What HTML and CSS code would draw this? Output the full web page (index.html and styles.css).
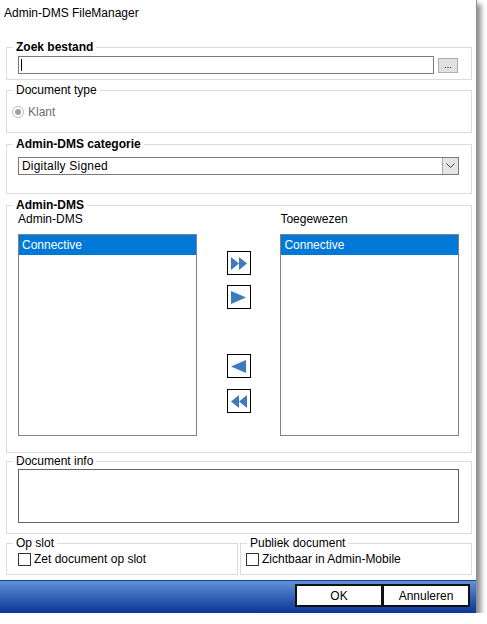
FILE: index.html
```html
<!DOCTYPE html>
<html lang="nl">
<head>
    <meta charset="UTF-8">
    <title>Admin-DMS FileManager</title>
    <link rel="stylesheet" href="styles.css">
</head>
<body>
    <div class="window">
        <div class="titlebar">Admin-DMS FileManager</div>
        <div class="content">
            <fieldset class="group g-file">
                <legend class="bold">Zoek bestand</legend>
                <div class="body row">
                    <div class="textbox"><span class="caret"></span></div>
                    <button class="browse">...</button>
                </div>
            </fieldset>

            <fieldset class="group g-type">
                <legend>Document type</legend>
                <div class="body row">
                    <span class="radio"><span class="dot"></span></span>
                    <span class="disabled">Klant</span>
                </div>
            </fieldset>

            <fieldset class="group g-cat">
                <legend class="bold">Admin-DMS categorie</legend>
                <div class="body">
                    <div class="combo">
                        <span class="combo-text">Digitally Signed</span>
                        <span class="combo-btn">
                            <svg width="9" height="6" viewBox="0 0 9 6"><path d="M0.5 0.5 L4.5 4.5 L8.5 0.5" fill="none" stroke="#404040" stroke-width="1"/></svg>
                        </span>
                    </div>
                </div>
            </fieldset>

            <fieldset class="group g-dms">
                <legend class="bold">Admin-DMS</legend>
                <div class="body dms">
                    <div class="col">
                        <div class="label">Admin-DMS</div>
                        <div class="listbox">
                            <div class="item selected">Connective</div>
                        </div>
                    </div>
                    <div class="movers">
                        <button class="mover m-all-right">
                            <svg width="16" height="13" viewBox="0 0 16 13"><path d="M0 0 L8 6.5 L0 13 Z M8 0 L16 6.5 L8 13 Z" fill="#3d7abf"/></svg>
                        </button>
                        <button class="mover m-right">
                            <svg width="15" height="13" viewBox="0 0 15 13"><path d="M0 0 L15 6.5 L0 13 Z" fill="#3d7abf"/></svg>
                        </button>
                        <button class="mover m-left">
                            <svg width="15" height="13" viewBox="0 0 15 13"><path d="M15 0 L0 6.5 L15 13 Z" fill="#3d7abf"/></svg>
                        </button>
                        <button class="mover m-all-left">
                            <svg width="16" height="13" viewBox="0 0 16 13"><path d="M8 0 L0 6.5 L8 13 Z M16 0 L8 6.5 L16 13 Z" fill="#3d7abf"/></svg>
                        </button>
                    </div>
                    <div class="col">
                        <div class="label">Toegewezen</div>
                        <div class="listbox">
                            <div class="item selected">Connective</div>
                        </div>
                    </div>
                </div>
            </fieldset>

            <fieldset class="group g-info">
                <legend>Document info</legend>
                <div class="body">
                    <div class="memo"></div>
                </div>
            </fieldset>

            <div class="split">
                <fieldset class="group g-lock">
                    <legend>Op slot</legend>
                    <div class="body row">
                        <span class="check"></span>
                        <span>Zet document op slot</span>
                    </div>
                </fieldset>
                <fieldset class="group g-public">
                    <legend>Publiek document</legend>
                    <div class="body row">
                        <span class="check"></span>
                        <span>Zichtbaar in Admin-Mobile</span>
                    </div>
                </fieldset>
            </div>
        </div>
        <div class="footer">
            <button class="dlg-btn">OK</button>
            <button class="dlg-btn">Annuleren</button>
        </div>
    </div>
</body>
</html>
```

FILE: styles.css
```css
body {
    margin: 0;
    background-color: #ffffff;
    font-family: "Liberation Sans", Arial, sans-serif;
    font-size: 12px;
    color: #000000;
}
.window {
    width: 476px;
    height: 613px;
    background-color: #ffffff;
    border-right: 1px solid #8f8f8f;
    box-shadow: 4px 4px 5px rgba(0, 0, 0, 0.45);
    display: flex;
    flex-direction: column;
}
.titlebar {
    height: 26px;
    padding: 6px 0 0 4px;
    line-height: 14px;
    box-sizing: border-box;
}
.content {
    flex: 1;
    padding: 14px 4px 0 6px;
    display: flex;
    flex-direction: column;
}
.group {
    margin: 0;
    padding: 0;
    border: 1px solid #dcdcdc;
    min-width: 0;
}
.group legend {
    margin-left: 6px;
    padding: 0 3px;
    line-height: 14px;
}
.bold {
    font-weight: bold;
}
.row {
    display: flex;
    align-items: center;
}

/* Zoek bestand */
.g-file .body {
    padding: 2px 13px 5px 11px;
}
.textbox {
    flex: 1;
    height: 18px;
    border: 1px solid #7a7a7a;
    box-sizing: border-box;
    display: flex;
    align-items: center;
    padding-left: 2px;
}
.caret {
    width: 1px;
    height: 12px;
    background-color: #000000;
}
.browse {
    width: 20px;
    height: 15px;
    margin-left: 4px;
    padding: 0;
    border: 1px solid #adadad;
    background-color: #e1e1e1;
    font-family: inherit;
    font-size: 9px;
    line-height: 11px;
}

/* Document type */
.g-type {
    margin-top: 3px;
}
.g-type .body {
    padding: 8px 0 13px 5px;
    height: 14px;
}
.radio {
    width: 10px;
    height: 10px;
    border: 1px solid #bcbcbc;
    border-radius: 50%;
    display: flex;
    align-items: center;
    justify-content: center;
    margin-right: 4px;
}
.dot {
    width: 6px;
    height: 6px;
    border-radius: 50%;
    background-color: #a0a0a0;
}
.disabled {
    color: #6d6d6d;
}

/* Categorie */
.g-cat {
    margin-top: 4px;
}
.g-cat .body {
    padding: 6px 12px 18px 11px;
}
.combo {
    height: 18px;
    border: 1px solid #7a7a7a;
    box-sizing: border-box;
    display: flex;
    align-items: stretch;
}
.combo-text {
    flex: 1;
    padding-left: 3px;
    line-height: 16px;
    font-size: 12px;
    letter-spacing: 0.2px;
}
.combo-btn {
    width: 15px;
    background-color: #e5e5e5;
    border-left: 1px solid #adadad;
    display: flex;
    align-items: center;
    justify-content: center;
}

/* Admin-DMS lijsten */
.g-dms {
    margin-top: 4px;
}
.dms {
    display: flex;
    padding: 0 12px 16px 11px;
}
.col {
    width: 179px;
    display: flex;
    flex-direction: column;
}
.label {
    line-height: 14px;
    height: 22px;
}
.listbox {
    height: 202px;
    border: 1px solid #828282;
    box-sizing: border-box;
}
.item {
    height: 20px;
    line-height: 20px;
    padding-left: 3px;
    font-size: 12px;
}
.selected {
    background-color: #0078d7;
    color: #ffffff;
}
.movers {
    width: 84px;
    padding-top: 39px;
    display: flex;
    flex-direction: column;
    align-items: center;
}
.mover {
    width: 24px;
    height: 24px;
    padding: 0;
    border: 1px solid #000000;
    background-color: #ffffff;
    display: flex;
    align-items: center;
    justify-content: center;
}
.m-right {
    margin-top: 10px;
}
.m-left {
    margin-top: 45px;
}
.m-all-left {
    margin-top: 11px;
}

/* Document info */
.g-info {
    margin-top: 1px;
}
.g-info .body {
    padding: 1px 12px 10px 11px;
}
.memo {
    height: 54px;
    border: 1px solid #646464;
    box-sizing: border-box;
}

/* Op slot / Publiek */
.split {
    display: flex;
    gap: 2px;
    margin-top: 2px;
}
.g-lock {
    width: 232px;
    box-sizing: border-box;
}
.g-public {
    flex: 1;
}
.split .body {
    padding: 2px 0 8px 11px;
    height: 14px;
}
.g-public .body {
    padding-left: 5px;
}
.check {
    width: 13px;
    height: 13px;
    border: 1px solid #333333;
    box-sizing: border-box;
    margin-right: 3px;
}

/* Knoppen */
.footer {
    height: 33px;
    box-sizing: border-box;
    border-top: 1px solid #1c3f93;
    background: linear-gradient(#6090d8, #0b3494);
    display: flex;
    justify-content: flex-end;
    align-items: flex-start;
    padding: 3px 6px 0 0;
}
.dlg-btn {
    width: 88px;
    height: 23px;
    padding: 0;
    border: 2px solid #111111;
    background-color: #ffffff;
    font-family: inherit;
    font-size: 12px;
}
.dlg-btn + .dlg-btn {
    margin-left: -1px;
}
```
